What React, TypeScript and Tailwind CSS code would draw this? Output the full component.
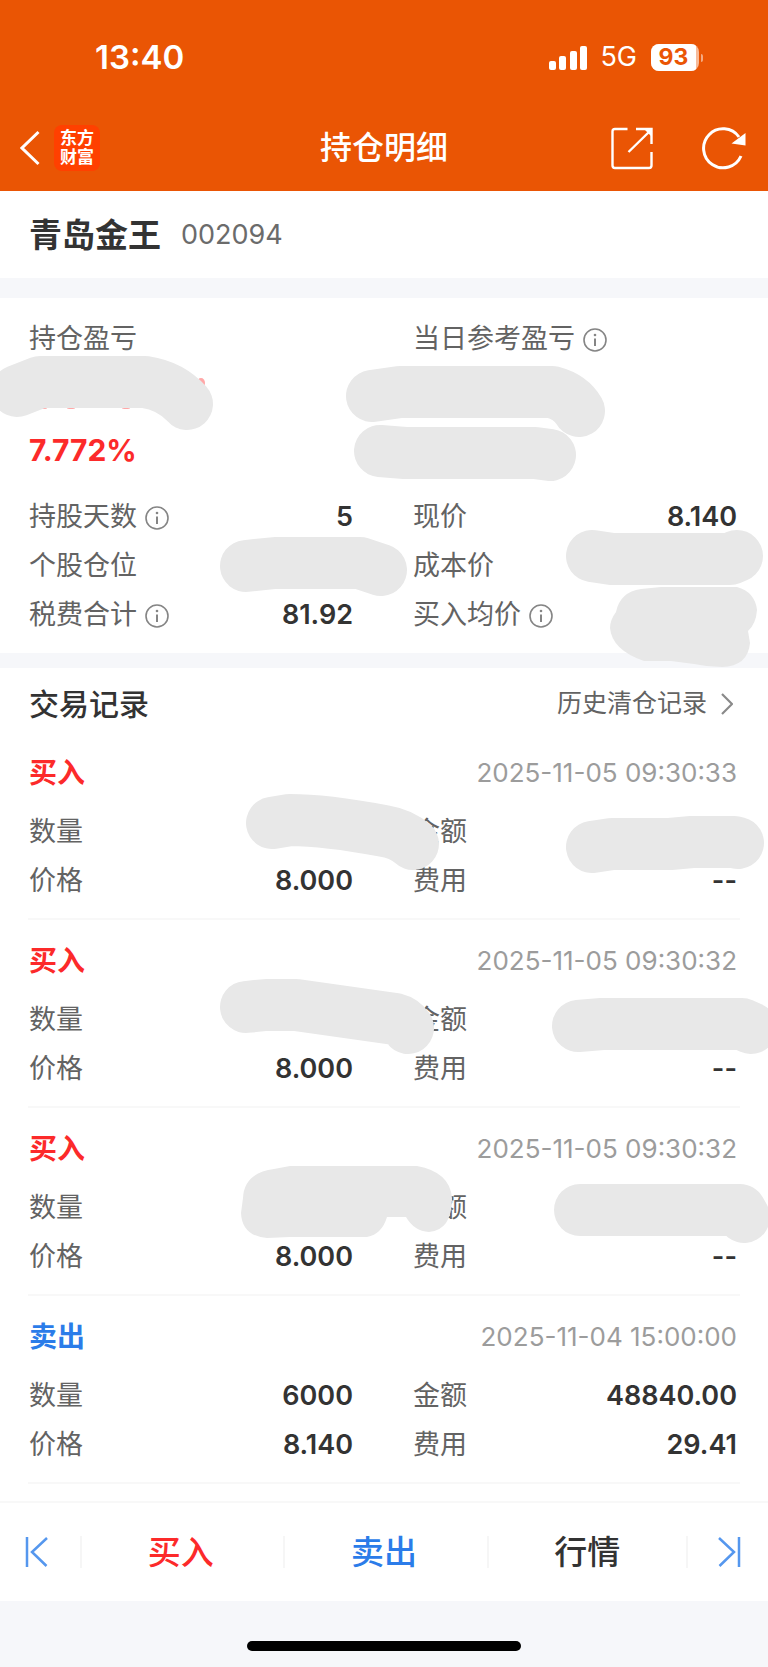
import type { ReactNode } from 'react';

interface Trade {
  side: '买入' | '卖出';
  time: string;
  quantity: string;
  amount: string;
  price: string;
  fee: string;
  mask?: ReactNode;
}

const trades: Trade[] = [
  {
    side: '买入',
    time: '2025-11-05 09:30:33',
    quantity: '',
    amount: '',
    price: '8.000',
    fee: '--',
    mask: (
      <>
        <path d="M272 91 L290 88 Q325 88 384 99 Q402 102 413 112" />
        <path d="M592 115 L612 112 H670 L692 110 H734 L738 111" />
      </>
    ),
  },
  {
    side: '买入',
    time: '2025-11-05 09:30:32',
    quantity: '',
    amount: '',
    price: '8.000',
    fee: '--',
    mask: (
      <>
        <path d="M246 87 L266 85 H296 L395 99 Q403 101 408 108" />
        <path d="M578 106 L602 104 H742 L751 108" />
      </>
    ),
  },
  {
    side: '买入',
    time: '2025-11-05 09:30:32',
    quantity: '',
    amount: '',
    price: '8.000',
    fee: '--',
    mask: (
      <>
        <path
          className="fill-[#e8e8e8] stroke-none"
          d="M290 58 H417 Q450 64 452 90 Q452 122 429 124 Q414 123 406 109 H387 Q382 126 367 129 H290 L267 130 Q242 128 241 105 L243 90 Q244 65 274 61 Z"
        />
        <path d="M580 102 H740 L744 109" />
      </>
    ),
  },
  {
    side: '卖出',
    time: '2025-11-04 15:00:00',
    quantity: '6000',
    amount: '48840.00',
    price: '8.140',
    fee: '29.41',
  },
];

// grey brush strokes that hide the private figures
function Mask({ children }: { children: ReactNode }) {
  return (
    <svg
      className="pointer-events-none absolute left-0 top-0 z-10 h-px w-[768px] overflow-visible fill-none stroke-[#e8e8e8]"
      strokeWidth="52"
      strokeLinecap="round"
      strokeLinejoin="round"
      aria-hidden="true"
    >
      {children}
    </svg>
  );
}

function InfoIcon() {
  return (
    <svg className="h-6 w-6" viewBox="0 0 24 24" fill="none" stroke="#858585" strokeWidth="1.6" aria-hidden="true">
      <circle cx="12" cy="12" r="11" />
      <path d="M12 10.5V18" strokeWidth="2" />
      <circle cx="12" cy="7" r="1.3" fill="#858585" stroke="none" />
    </svg>
  );
}

function Row({ label, value, info }: { label: string; value?: string; info?: boolean }) {
  return (
    <div className="flex h-[49px] items-center justify-between">
      <dt className="flex items-center gap-2 text-[#636363]">
        {label}
        {info && <InfoIcon />}
      </dt>
      <dd className="font-semibold text-[#333]">{value}</dd>
    </div>
  );
}

function StatusBar() {
  return (
    <div className="flex h-[103px] items-center justify-between pl-[95px] pr-[65px] pt-3">
      <span className="text-[33px] font-semibold">13:40</span>
      <div className="flex items-center">
        <svg className="h-6 w-10" viewBox="0 0 40 24" fill="white" aria-hidden="true">
          <rect x="1" y="15" width="7" height="9" rx="2" />
          <rect x="11" y="10" width="7" height="14" rx="2" />
          <rect x="22" y="5" width="7" height="19" rx="2" />
          <rect x="32" y="0" width="7" height="24" rx="2" />
        </svg>
        <span className="ml-3 text-[27px]">5G</span>
        <span className="ml-3.5 flex h-[27px] w-12 overflow-hidden rounded-lg bg-white/60">
          <span className="flex w-[45px] items-center justify-center bg-white text-[23px] font-bold text-[#ea5504]">
            93
          </span>
        </span>
        <span className="ml-0.5 h-2 w-0.5 rounded-r bg-white/50" />
      </div>
    </div>
  );
}

function NavBar() {
  return (
    <div className="grid h-[88px] grid-cols-[1fr_auto_1fr] items-center pt-0.5">
      <div className="flex items-center gap-3.5 pl-5">
        <button aria-label="返回">
          <svg className="h-9 w-5" viewBox="0 0 20 36" fill="none" stroke="white" strokeWidth="3" aria-hidden="true">
            <path d="M18.5 2L2 18L18.5 34" />
          </svg>
        </button>
        <span className="flex h-[46px] w-[46px] flex-col items-center justify-center rounded-lg bg-[#ff4000] text-[17px] font-bold leading-[19px]">
          <span>东方</span>
          <span>财富</span>
        </span>
      </div>
      <h1 className="text-[32px] font-medium">持仓明细</h1>
      <div className="flex items-center justify-end gap-12 pr-[22px]">
        <button aria-label="分享">
          <svg className="h-11 w-11" viewBox="0 0 44 44" fill="none" stroke="white" strokeWidth="2.4" aria-hidden="true">
            <path d="M17.5 3H5Q2.5 3 2.5 5.5V39.5Q2.5 42 5 42H39Q41.5 42 41.5 39.5V26" />
            <path d="M26 3H41.5V18M18.5 26L41 4" />
            <path d="M34 3H41.5V10.5Z" fill="white" stroke="none" />
          </svg>
        </button>
        <button aria-label="刷新">
          <svg className="h-11 w-11" viewBox="0 0 44 44" fill="none" stroke="white" strokeWidth="3" aria-hidden="true">
            <path d="M39 30A19.5 19.5 0 1 1 37 11" />
            <path d="M43.5 7V19.5L29.5 17.5Z" fill="white" stroke="none" />
          </svg>
        </button>
      </div>
    </div>
  );
}

function TradeItem({ trade }: { trade: Trade }) {
  return (
    <li className="relative px-7">
      <div className="border-b-2 border-[#f8f8f8] pb-3 pl-px pr-[3px] pt-4">
        <div className="flex h-[50px] items-center justify-between">
          <span className={'text-[28px] font-bold ' + (trade.side === '买入' ? 'text-[#fc2a2a]' : 'text-[#2b7ce9]')}>
            {trade.side}
          </span>
          <time className="text-[26px] leading-[34px] text-[#9c9c9c]">{trade.time}</time>
        </div>
        <dl className="grid grid-cols-2 gap-x-15 pt-2.5">
          <Row label="数量" value={trade.quantity} />
          <Row label="金额" value={trade.amount} />
          <Row label="价格" value={trade.price} />
          <Row label="费用" value={trade.fee} />
        </dl>
      </div>
      {trade.mask && <Mask>{trade.mask}</Mask>}
    </li>
  );
}

function BottomBar() {
  return (
    <nav className="flex h-[100px] items-center border-t-2 border-[#f8f8f8] bg-white text-[33px] font-medium">
      <button className="flex w-20 shrink-0 justify-center pr-2" aria-label="上一只">
        <svg className="h-8 w-6" viewBox="0 0 24 32" fill="none" stroke="#5597ee" strokeWidth="2.5" aria-hidden="true">
          <path d="M3 1V31M23 2L8 16L22.5 30" />
        </svg>
      </button>
      <button className="h-8 flex-1 border-l-2 border-[#f6f6f6] pr-1 leading-8 text-[#fc2a2a]">买入</button>
      <button className="h-8 flex-1 border-l-2 border-[#f6f6f6] pr-1 leading-8 text-[#2b7ce9]">卖出</button>
      <button className="h-8 flex-1 border-x-2 border-[#f6f6f6] leading-8 text-[#333]">行情</button>
      <button className="flex w-20 shrink-0 justify-center pl-1" aria-label="下一只">
        <svg className="h-8 w-6" viewBox="0 0 24 32" fill="none" stroke="#5597ee" strokeWidth="2.5" aria-hidden="true">
          <path d="M21 1V31M1 2L16 16L1.5 30" />
        </svg>
      </button>
    </nav>
  );
}

export default function App() {
  return (
    <div className="min-h-screen overflow-hidden bg-[#f6f7fa] font-['Inter','Noto_Sans_CJK_SC',sans-serif] text-[27px]">
      <header className="bg-[#ea5504] text-white">
        <StatusBar />
        <NavBar />
      </header>

      <section className="flex h-[87px] items-center gap-5 bg-white pl-[29px] pr-[31px] pt-0.5">
        <h2 className="text-[33px] font-bold text-[#333]">青岛金王</h2>
        <span className="text-[#6b6b6b]">002094</span>
      </section>

      <section className="relative mt-5 bg-white pb-[13px] pl-[29px] pr-[31px] pt-[17px]">
        <dl className="grid grid-cols-2 gap-x-15">
          <Row label="持仓盈亏" />
          <Row label="当日参考盈亏" info />
        </dl>
        <p className="mb-[18px] mt-[62px] flex h-[49px] items-center text-[30px] font-bold text-[#fc2a2a]">7.772%</p>
        <dl className="grid grid-cols-2 gap-x-15">
          <Row label="持股天数" value="5" info />
          <Row label="现价" value="8.140" />
          <Row label="个股仓位" />
          <Row label="成本价" />
          <Row label="税费合计" value="81.92" info />
          <Row label="买入均价" info />
        </dl>
        <Mask>
          <g className="fill-[#ffa8a8] stroke-none">
            <ellipse cx="43" cy="110" rx="4" ry="1" />
            <ellipse cx="71" cy="110" rx="4" ry="1" />
            <ellipse cx="126" cy="110" rx="4" ry="1" />
            <ellipse cx="201" cy="85" rx="4" ry="5" />
          </g>
          <path d="M17 93 L40 84 H145 Q171 88 187 106" />
          <path d="M372 98 L400 94 H552 Q571 99 579 113" />
          <path d="M380 153 L405 155 H535 L550 157" />
          <path d="M246 268 L275 265 H360 L381 272" />
          <path d="M592 258 L612 261 H730 L737 258" />
          <path
            className="fill-[#e8e8e8] stroke-none"
            d="M661 289 H737 Q755 294 757 312 Q756 326 748 333 L750 345 Q748 368 722 369 Q708 369 694 366 L671 363 H644 Q612 352 610 330 Q610 322 616 314 Q620 294 641 291 Z"
          />
        </Mask>
      </section>

      <section className="mt-[15px] bg-white pb-[17px] pt-2">
        <div className="flex h-14 items-center justify-between pl-[29px] pr-[31px]">
          <h2 className="text-[30px] font-medium text-[#333]">交易记录</h2>
          <a href="#history" className="flex items-center gap-3.5 pr-1 text-[25px] text-[#636363]">
            历史清仓记录
            <svg className="h-6 w-3" viewBox="0 0 12 24" fill="none" stroke="#8a8a8a" strokeWidth="2.2" aria-hidden="true">
              <path d="M1 2L11 12L1 22" />
            </svg>
          </a>
        </div>
        <ul>
          {trades.map((t, i) => (
            <TradeItem key={i} trade={t} />
          ))}
        </ul>
      </section>

      <BottomBar />
      <div className="flex h-[66px] items-end justify-center pb-4">
        <div className="h-2.5 w-[274px] rounded-full bg-black" />
      </div>
    </div>
  );
}
